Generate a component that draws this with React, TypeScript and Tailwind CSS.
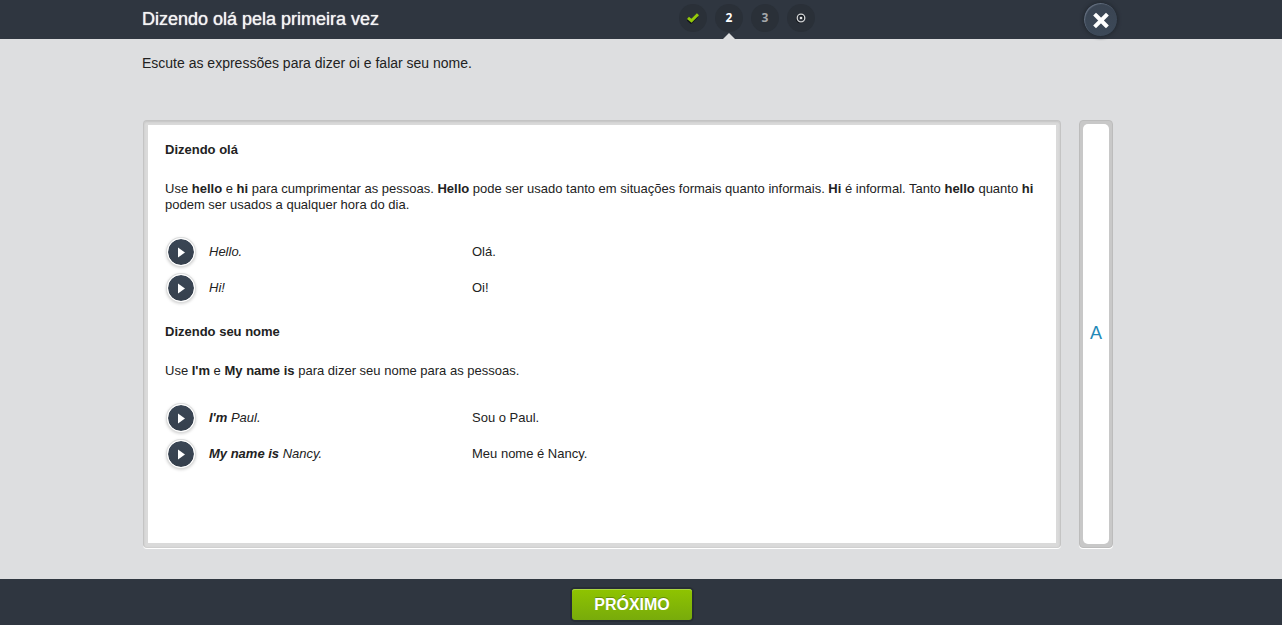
import type { ReactNode } from 'react';

function StepCircle({ label, current, children }: { label: string; current?: boolean; children: ReactNode }) {
  return (
    <li className="relative">
      <button
        type="button"
        aria-label={label}
        aria-current={current ? 'step' : undefined}
        className={`flex h-7 w-7 items-center justify-center rounded-full bg-[#2a3038] font-['Open_Sans',sans-serif] text-xs font-bold ${current ? 'text-white' : 'text-[#a5a8ab]'}`}
      >
        {children}
      </button>
      {current && (
        <svg className="absolute top-[29px] left-2 h-1.5 w-3" viewBox="0 0 12 6" aria-hidden="true">
          <path d="M0 6 6 0l6 6z" fill="#dddee0" />
        </svg>
      )}
    </li>
  );
}

function Phrase({ english, children, portuguese }: { english: string; children: ReactNode; portuguese: string }) {
  return (
    <li className="flex h-9 items-center">
      <button
        type="button"
        aria-label={`Ouvir: ${english}`}
        className="ml-0.5 flex h-7 w-7 shrink-0 items-center justify-center rounded-full border border-white bg-linear-to-b from-[#3a4655] to-[#36404d] bg-clip-padding shadow-[0_0_0_1px_#dcdddd,0_1px_3px_1px_#d4d4d4]"
      >
        <svg className="h-3 w-3" viewBox="0 0 12 12" aria-hidden="true">
          <path d="M3 1.5 10 6.5 3 11.5z" fill="#fff" />
        </svg>
      </button>
      <span className="ml-3.5 w-[263px] italic">{children}</span>
      <span>{portuguese}</span>
    </li>
  );
}

export default function App() {
  return (
    <div className="flex min-h-screen flex-col bg-[#dddee0] font-['Liberation_Sans',Arial,sans-serif] text-[#222]">
      <header className="h-[39px] bg-[#2f3640] pr-[18px]">
        <div className="mx-auto flex h-full max-w-[980px]">
          <h1 className="w-[537px] pt-[7px] text-lg leading-6 text-[#f4f4f4] [text-shadow:0_0_1px_#f4f4f4]">
            Dizendo olá pela primeira vez
          </h1>
          <ol className="flex gap-2 pt-1">
            <StepCircle label="Etapa 1, concluída">
              <svg className="h-3 w-3" viewBox="0 0 12 12" fill="none" aria-hidden="true">
                <path d="m.5 7.5 3.5 3 6-6" stroke="#101418" strokeWidth="2.5" />
                <path d="m1 5.8 3.5 3L11 2.2" stroke="#94c90b" strokeWidth="3" />
              </svg>
            </StepCircle>
            <StepCircle label="Etapa 2" current>2</StepCircle>
            <StepCircle label="Etapa 3">3</StepCircle>
            <StepCircle label="Etapa final">
              <svg className="h-3 w-3" viewBox="0 0 12 12" fill="none" aria-hidden="true">
                <circle cx="5.3" cy="6.8" r="3.8" stroke="#101418" strokeWidth="1.4" />
                <circle cx="6" cy="6" r="3.8" stroke="#d3d5d7" strokeWidth="1.3" />
                <circle cx="6" cy="6" r="1.3" fill="#e5e6e7" />
              </svg>
            </StepCircle>
          </ol>
          <button
            type="button"
            aria-label="Fechar"
            className="mt-0.5 mr-1 ml-auto flex h-[35px] w-[35px] items-center justify-center rounded-full border border-[#252c35] bg-linear-to-b from-[#3a4452] to-[#3c4958] shadow-[inset_1px_1px_1px_#657080,0_0_3px_1px_#272d35]"
          >
            <svg className="h-5 w-5" viewBox="0 0 20 20" aria-hidden="true">
              <path d="m5 5.5 10 10M15 5.5l-10 10" stroke="#fff" strokeWidth="4" strokeLinecap="square" />
            </svg>
          </button>
        </div>
      </header>

      <main className="flex flex-1 flex-col pr-[18px]">
        <div className="mx-auto flex w-full max-w-[980px] flex-1 flex-col pb-[31px]">
          <p className="pt-3.5 text-sm leading-5">Escute as expressões para dizer oi e falar seu nome.</p>

          <div className="mt-[47px] flex flex-1 gap-[18px] pr-[9px] pl-px">
            <section className="flex flex-1 rounded border border-[#c4c4c4] border-b-[#d0d0d0] bg-[#dadada] p-1 shadow-[0_1px_0_#fff,inset_0_1px_2px_#c4c4c4]">
              <div className="flex-1 bg-white px-[17px] pt-[17px] text-[13px] leading-4">
                <h2 className="font-bold">Dizendo olá</h2>
                <p className="mt-[23px]">
                  Use <b>hello</b> e <b>hi</b> para cumprimentar as pessoas. <b>Hello</b> pode ser usado tanto em
                  situações formais quanto informais. <b>Hi</b> é informal. Tanto <b>hello</b> quanto <b>hi</b> podem
                  ser usados a qualquer hora do dia.
                </p>
                <ul className="mt-[21px]">
                  <Phrase english="Hello." portuguese="Olá.">Hello.</Phrase>
                  <Phrase english="Hi!" portuguese="Oi!">Hi!</Phrase>
                </ul>
                <h2 className="mt-[18px] font-bold">Dizendo seu nome</h2>
                <p className="mt-[23px]">
                  Use <b>I'm</b> e <b>My name is</b> para dizer seu nome para as pessoas.
                </p>
                <ul className="mt-[21px]">
                  <Phrase english="I'm Paul." portuguese="Sou o Paul."><b>I'm</b> Paul.</Phrase>
                  <Phrase english="My name is Nancy." portuguese="Meu nome é Nancy."><b>My name is</b> Nancy.</Phrase>
                </ul>
              </div>
            </section>

            <aside className="flex w-[34px] rounded border border-[#bcbcbc] bg-[#c8c8c8] p-[3px] shadow-[0_1px_0_#fff]">
              <button type="button" className="flex-1 rounded-[5px] bg-white pb-0.5 text-lg text-[#2389b8]">A</button>
            </aside>
          </div>
        </div>
      </main>

      <footer className="h-[46px] bg-[#2f3640] pr-[18px]">
        <div className="mx-auto flex max-w-[980px] justify-center pt-2.5">
          <button
            type="button"
            className="h-[31px] w-[120px] rounded-[3px] bg-linear-to-b from-[#8fc400] to-[#78ab0b] text-base font-bold text-white shadow-[0_0_0_2px_#272d35,inset_0_1px_0_#a9d541] [text-shadow:0_-1px_0_#638d08]"
          >
            PRÓXIMO
          </button>
        </div>
      </footer>
    </div>
  );
}
